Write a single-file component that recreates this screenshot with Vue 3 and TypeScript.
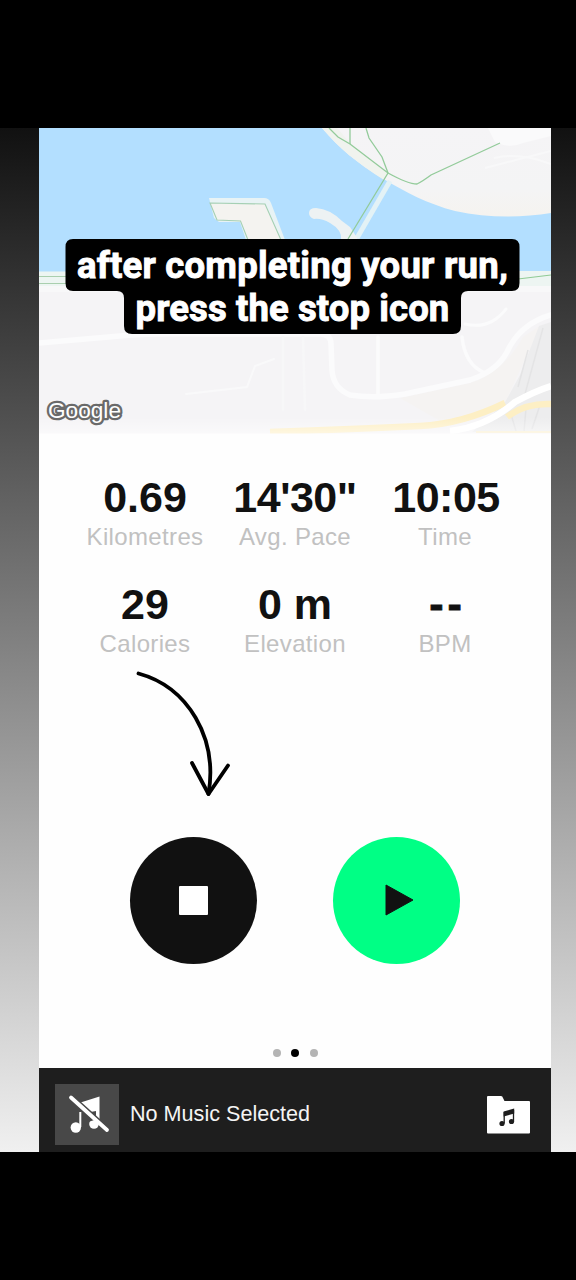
<script setup lang="ts">
interface Metric {
  value: string
  label: string
  kind?: string
}

const metrics: Metric[] = [
  { value: '0.69', label: 'Kilometres' },
  { value: '14\'30"', label: 'Avg. Pace', kind: 'pace' },
  { value: '10:05', label: 'Time', kind: 'time' },
  { value: '29', label: 'Calories' },
  { value: '0 m', label: 'Elevation' },
  { value: '--', label: 'BPM', kind: 'bpm' },
]

const pages: boolean[] = [false, true, false]
</script>

<template>
  <div class="stage">
    <div class="backdrop">
      <main class="app">
        <section class="map">
          <svg class="map-art" viewBox="39 128 512 310" width="512" height="310">
            <defs>
              <linearGradient id="fade" x1="0" y1="0" x2="0" y2="1">
                <stop offset="0" stop-color="#fff" stop-opacity="0" />
                <stop offset="1" stop-color="#fff" />
              </linearGradient>
              <linearGradient id="hill" x1="0" y1="0" x2="0" y2="1">
                <stop offset="0" stop-color="#f5f4f6" />
                <stop offset=".7" stop-color="#f4f4f5" />
                <stop offset="1" stop-color="#f5f3ef" />
              </linearGradient>
            </defs>
            <rect x="39" y="128" width="512" height="310" fill="#f5f4f6" />
            <path d="M39 128H551V275H39Z" fill="#b3dfff" />
            <path d="M39 271.500H200L551 271V286H39Z" fill="#edf5f2" />
            <path d="M39 276.500H120M39 283.500H120" fill="none" stroke="#a9cfae" stroke-width="1" />
            <path d="M39 286H551V292H39Z" fill="#f8f8f9" />
            <path d="M518 279L551 275" stroke="#8fcb95" stroke-width="1.200" />
            <!-- northern shore -->
            <path d="M322 128C339 148 357 163 382 178C405 192 428 204 455 211C487 218 521 218 551 213V128Z" fill="url(#hill)" />
            <path d="M322 128C339 148 357 163 384 180L388 174L350 143L337 128Z" fill="#f0f3ee" />
            <path d="M488 128L495 142Q510 149 523 143L551 136V128Z" fill="#fafafb" />
            <path d="M494 158Q520 152 551 164M485 168L551 151" fill="none" stroke="#f8f8f9" stroke-width="2" />
            <!-- bridge -->
            <path d="M390 181L357 238" stroke="#e3f2f6" stroke-width="5" />
            <path d="M309 213Q309 208 316 208Q330 209 342 221L350 227L358 239H341Q342 230 330 223Q321 218 314 219Q309 217 309 213Z" fill="#edf2f3" />
            <g fill="none" stroke="#93cb9a" stroke-width="1.300">
              <path d="M329 128L338 137L350 144L388 173Q408 184 417 184Q423 181 431 175L500 143" />
              <path d="M350 128V144M366 128L369 138L382 157L388 173L348 239" />
            </g>
            <!-- pier -->
            <path d="M209 198H264Q269 198 271 203L285 240H246L240 222H219L214 218Z" fill="#e8f3f5" />
            <path d="M210 203L265 204L281 240H248L240.500 221L217 220Z" fill="#f4f3f0" stroke="#a5d0b4" stroke-width="1.100" />
            <!-- streets -->
            <path d="M400 398L470 383Q504 372 523 337L541 325L504 405L440 421Z" fill="#f5f3f2" />
            <path d="M551 322L539 326L520 375L504 404L472 432H551Z" fill="#ededee" />
            <g fill="none" stroke="#fbfbfc" stroke-linecap="round">
              <path d="M39 343L120 336Q150 333 204 334H320Q331 334 331 344L332 370Q333 388 350 395Q374 399 405 394L470 380Q497 371 507 352Q520 324 551 315" stroke-width="5.500" />
              <path d="M378 337V394M462 337Q465 365 485 373" stroke-width="3.500" />
              <path d="M465 324Q490 330 506 309" stroke-width="3" />
              <path d="M283 337V410M303 337L305 410" stroke="#f7f7f8" stroke-width="2.500" />
              <path d="M186 394L247 387L255 366L274 359" stroke="#f9f9fa" stroke-width="2" />
            </g>
            <path d="M528 350L518 387M543 328L525 394M510 411L516 431M526 408L524 432M540 405L532 429" fill="none" stroke="#e4e4e5" stroke-width="1.500" />
            <path d="M270 432Q356 429 420 426Q462 424 505 403" fill="none" stroke="#fdefc4" stroke-width="6.500" />
            <path d="M507 417Q525 403 551 404" fill="none" stroke="#fdefc4" stroke-width="6.500" />
            <path d="M450 431Q486 427 515 402Q535 391 551 386" fill="none" stroke="#fff" stroke-width="6.500" />
            <path d="M476 432H551" stroke="#faefd0" stroke-width="2" />
            <rect x="39" y="417" width="512" height="17" fill="url(#fade)" opacity=".5" />
            <rect x="39" y="433.500" width="512" height="5" fill="#fefefe" />
            <text class="brand" x="48" y="418" textLength="73" lengthAdjust="spacingAndGlyphs">Google</text>
          </svg>
        </section>

        <section class="metrics">
          <div v-for="m in metrics" :key="m.label" class="metric">
            <span class="value" :class="m.kind">{{ m.value }}</span>
            <span class="label">{{ m.label }}</span>
          </div>
        </section>

        <svg class="arrow" viewBox="130 665 110 135" width="110" height="135">
          <g fill="none" stroke="#000" stroke-width="3.800" stroke-linecap="round" stroke-linejoin="round">
            <path d="M138.500 673.500C188 687 218 738 208.500 794" />
            <path d="M192 763L208.500 794L228 765.500" />
          </g>
        </svg>

        <section class="controls">
          <button class="round stop" aria-label="Stop">
            <span class="square"></span>
          </button>
          <button class="round play" aria-label="Resume">
            <svg viewBox="0 0 29 32" width="29" height="32"><path d="M1 1L28 16L1 31Z" fill="#111" stroke="#111" stroke-linejoin="round" /></svg>
          </button>
        </section>

        <nav class="dots">
          <i v-for="(on, i) in pages" :key="i" :class="{ on }"></i>
        </nav>

        <footer class="music">
          <div class="cover">
            <svg viewBox="55 1084 64 61" width="64" height="61">
              <path d="M79 1103L99.500 1096.500V1124H96V1111L88 1112.500Z" fill="#fff" />
              <path d="M80.300 1112V1127" stroke="#fff" stroke-width="2" />
              <circle cx="75.800" cy="1127.500" r="5.200" fill="#fff" />
              <circle cx="94" cy="1124" r="4.800" fill="#fff" />
              <path d="M88 1112V1122L96 1119.500V1112Z" fill="#484848" />
              <path d="M73.500 1096.500L109.500 1129" stroke="#484848" stroke-width="2" />
              <path d="M71 1097.500L107 1130" stroke="#fff" stroke-width="3.800" stroke-linecap="round" />
            </svg>
          </div>
          <span class="track">No Music Selected</span>
          <svg class="folder" viewBox="487 1096 43 38" width="43" height="38">
            <path d="M487 1097Q487 1096 488 1096H501Q502.500 1096 503 1098L504.500 1101H529Q530 1101 530 1102V1132.500Q530 1133.500 529 1133.500H488Q487 1133.500 487 1132.500Z" fill="#fff" />
            <path d="M504.200 1112V1123.500M513.500 1110V1121.500" stroke="#1e1e1e" stroke-width="1.300" />
            <path d="M503.600 1111.500L514.200 1108.500V1113.500L503.600 1116.500Z" fill="#1e1e1e" />
            <circle cx="502" cy="1123.500" r="2.600" fill="#1e1e1e" />
            <circle cx="511.500" cy="1121.500" r="2.600" fill="#1e1e1e" />
          </svg>
        </footer>
      </main>
    </div>

    <div class="caption">
      <svg class="plate" viewBox="65 239 455 95" width="455" height="95">
        <path d="M73 239H512Q519.500 239 519.500 247V283Q519.500 291 512 291H468Q461 291 461 298V326Q461 334 453 334H132Q124 334 124 326V298Q124 291 117 291H73Q65.500 291 65.500 283V247Q65.500 239 73 239Z" fill="#000" />
      </svg>
      <div class="line first">after completing your run,</div>
      <div class="line second">press the stop icon</div>
    </div>
  </div>
</template>

<style>
body {
  margin: 0;
  background: #000;
}
</style>

<style scoped>
.stage {
  position: relative;
  box-sizing: border-box;
  width: 576px;
  height: 1280px;
  padding: 128px 0;
  overflow: hidden;
  background: #000;
  font-family: 'Liberation Sans', Arial, sans-serif;
}
.backdrop {
  height: 1024px;
  padding: 0 25px 0 39px;
  background: linear-gradient(#111, #f0f0f0);
}
.app {
  display: flex;
  flex-direction: column;
  height: 1024px;
  background: #fefefe;
}
.map {
  height: 310px;
}
.map-art {
  display: block;
}
.brand {
  font: 400 22.5px 'Liberation Sans', sans-serif;
  fill: #fff;
  stroke: #6a6a6a;
  stroke-width: 4.6px;
  stroke-linejoin: round;
  paint-order: stroke;
}
.metrics {
  display: grid;
  grid-template-columns: repeat(3, 150px);
  grid-auto-rows: 107px;
  padding: 33px 0 0 31px;
  height: 194px;
  box-sizing: border-box;
  margin-bottom: 33px;
}
.metric {
  display: flex;
  flex-direction: column;
  align-items: center;
}
.value {
  height: 53px;
  line-height: 53px;
  font-size: 43px;
  font-weight: 700;
  color: #111;
  white-space: nowrap;
}
.label {
  line-height: 26px;
  font-size: 24px;
  letter-spacing: 0.35px;
  color: #c1c1c1;
  white-space: nowrap;
}
.pace {
  letter-spacing: -0.5px;
}
.time {
  letter-spacing: -0.5px;
  margin-left: 2px;
}
.bpm {
  letter-spacing: 4px;
  margin-right: -5px;
  -webkit-text-stroke: 0.8px #111;
}
.arrow {
  display: block;
  flex: none;
  margin-left: 91px;
}
.controls {
  display: flex;
  gap: 76px;
  margin: 37px 0 0 91px;
}
.round {
  display: flex;
  align-items: center;
  justify-content: center;
  width: 127px;
  height: 127px;
  padding: 0;
  border: 0;
  border-radius: 50%;
}
.stop {
  background: #111;
}
.play {
  padding: 0 0 2px 5px;
  background: #00ff85;
}
.square {
  width: 29px;
  height: 29px;
  background: #fff;
  border-radius: 1px;
}
.dots {
  display: flex;
  gap: 10.5px;
  margin: 84.5px 0 0 233.5px;
}
.dots i {
  width: 8px;
  height: 8px;
  border-radius: 50%;
  background: #b4b4b4;
}
.dots .on {
  background: #000;
}
.music {
  display: flex;
  align-items: center;
  box-sizing: border-box;
  height: 84px;
  margin-top: auto;
  padding: 8px 21px 0 16px;
  background: #1e1e1e;
}
.cover {
  width: 64px;
  height: 61px;
  background: #484848;
}
.cover svg {
  display: block;
}
.track {
  flex: 1;
  margin-left: 11px;
  font-size: 21.6px;
  line-height: 26px;
  color: #f4f4f4;
}
.folder {
  display: block;
  margin-top: 2px;
}
.caption {
  position: absolute;
  top: 239px;
  left: 65px;
  width: 455px;
  height: 95px;
}
.plate {
  position: absolute;
  inset: 0;
}
.line {
  position: relative;
  height: 43px;
  line-height: 54px;
  text-align: center;
  font-family: Roboto, sans-serif;
  font-weight: 700;
  font-size: 36.5px;
  color: #fff;
  -webkit-text-stroke: 0.9px #fff;
  white-space: nowrap;
}
.first {
  letter-spacing: 0.22px;
}
.second {
  letter-spacing: 0.1px;
}
</style>
